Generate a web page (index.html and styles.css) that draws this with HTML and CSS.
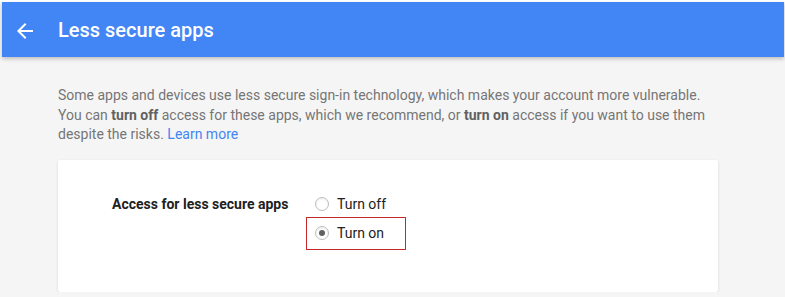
FILE: index.html
```html
<!DOCTYPE html>
<html lang="en">
<head>
    <meta charset="UTF-8">
    <title>Less secure apps</title>
    <link rel="stylesheet" href="styles.css">
</head>
<body>
    <div class="page">
        <header class="topbar">
            <svg class="back" width="24" height="24" viewBox="0 0 24 24">
                <path d="M20 11H7.83l5.59-5.59L12 4l-8 8 8 8 1.41-1.41L7.83 13H20v-2z" fill="#ffffff"/>
            </svg>
            <h1 class="title">Less secure apps</h1>
        </header>

        <main class="content">
            <p class="intro">
                Some apps and devices use less secure sign-in technology, which makes your account more vulnerable.
                You can <b>turn off</b> access for these apps, which we recommend, or <b>turn on</b> access if you want to use them
                despite the risks. <a href="#" class="link">Learn more</a>
            </p>

            <div class="card">
                <div class="setting">
                    <div class="setting-label">Access for less secure apps</div>
                    <div class="options">
                        <div class="option">
                            <span class="radio"></span>
                            <span>Turn off</span>
                        </div>
                        <div class="option option-marked">
                            <span class="radio radio-checked"></span>
                            <span>Turn on</span>
                        </div>
                    </div>
                </div>
            </div>
        </main>
    </div>
</body>
</html>
```

FILE: styles.css
```css
html, body {
    margin: 0;
    background-color: #f5f5f5;
}
body {
    font-family: Roboto, "Liberation Sans", sans-serif;
    font-size: 14px;
    color: #757575;
}
.page {
    border-top: 2px solid #ffffff;
}
.topbar {
    display: flex;
    align-items: center;
    height: 55px;
    margin: 0 1px 0 2px;
    padding-left: 11px;
    background-color: #4285f4;
    box-shadow: 0 2px 4px rgba(0, 0, 0, 0.22);
}
.back {
    margin-top: 2px;
    flex-shrink: 0;
}
.title {
    margin: 0 0 0 21px;
    color: #ffffff;
    font-size: 20px;
    font-weight: 500;
}
.content {
    padding: 29px 0 0 58px;
    width: 660px;
}
.intro {
    margin: 0 0 15px 0;
    line-height: 19.5px;
}
.intro b {
    color: #616161;
    font-weight: 700;
}
.link {
    color: #4285f4;
    text-decoration: none;
}
.card {
    background-color: #ffffff;
    border-radius: 2px;
    box-shadow: 0 1px 3px rgba(0, 0, 0, 0.12);
    height: 132px;
    box-sizing: border-box;
    padding: 30px 0 0 54px;
}
.setting {
    display: flex;
    align-items: flex-start;
}
.setting-label {
    width: 196px;
    line-height: 29px;
    color: #212121;
    font-weight: 700;
}
.option {
    display: flex;
    align-items: center;
    gap: 8px;
    height: 29px;
    width: 96px;
    box-sizing: border-box;
    padding-left: 7px;
    color: #212121;
}
.option-marked {
    outline: 1px solid #c62828;
    outline-offset: 1px;
}
.radio {
    display: inline-flex;
    align-items: center;
    justify-content: center;
    width: 14px;
    height: 14px;
    box-sizing: border-box;
    border: 1px solid #bdbdbd;
    border-radius: 50%;
    background-color: #ffffff;
    box-shadow: inset 0 1px 2px rgba(0, 0, 0, 0.08);
}
.radio-checked::after {
    content: "";
    width: 6px;
    height: 6px;
    border-radius: 50%;
    background-color: #616161;
}
```
